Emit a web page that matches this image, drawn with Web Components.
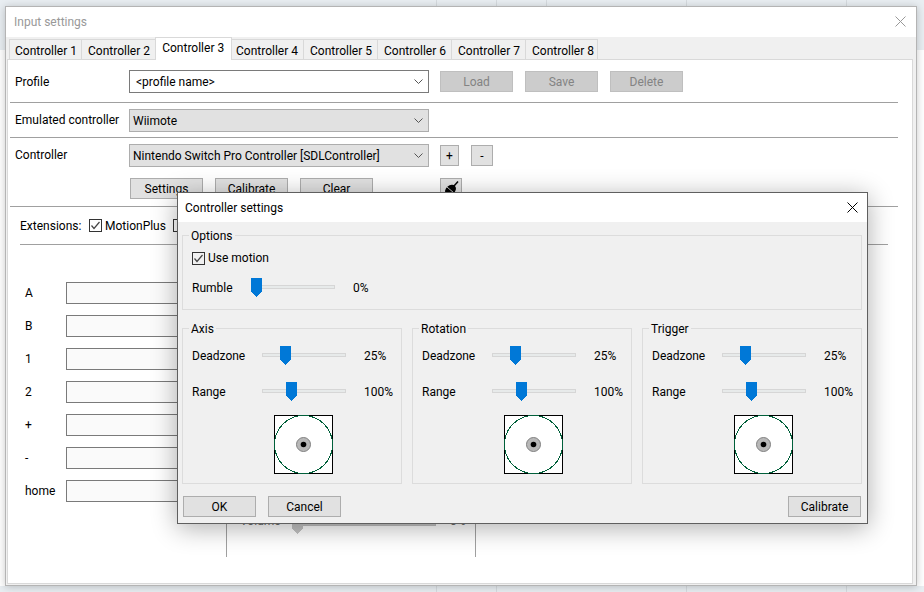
<!DOCTYPE html>
<html>
<head>
<meta charset="utf-8">
<title>Input settings</title>
<style>
  html, body { margin: 0; height: 100%; }
  body {
    width: 924px;
    height: 592px;
    overflow: hidden;
    position: relative;
    font: 12px Roboto, "Liberation Sans", sans-serif;
    color: #000;
    background:
      linear-gradient(#d6dbdf, #d6dbdf) 436px 0 / 1px 6px no-repeat,
      linear-gradient(#d6dbdf, #d6dbdf) 496px 0 / 1px 6px no-repeat,
      linear-gradient(#d6dbdf, #d6dbdf) 546px 0 / 1px 6px no-repeat,
      linear-gradient(#d6dbdf, #d6dbdf) 686px 0 / 1px 6px no-repeat,
      linear-gradient(#d6dbdf, #d6dbdf) 846px 0 / 1px 6px no-repeat,
      linear-gradient(#d6dbdf, #d6dbdf) 436px 586px / 1px 6px no-repeat,
      linear-gradient(#d6dbdf, #d6dbdf) 496px 586px / 1px 6px no-repeat,
      linear-gradient(#d6dbdf, #d6dbdf) 686px 586px / 1px 6px no-repeat,
      linear-gradient(#d6dbdf, #d6dbdf) 846px 586px / 1px 6px no-repeat,
      linear-gradient(#e9eef2, #e9eef2) 0 0 / 100% 50px no-repeat,
      linear-gradient(#e9eef2, #e9eef2) 0 586px / 100% 6px no-repeat,
      #fff;
  }
</style>
</head>
<body>
<input-settings></input-settings>
<controller-settings></controller-settings>

<script>
class UiButton extends HTMLElement {
  constructor() {
    super();
    const shadow = this.attachShadow({ mode: "open" });
    shadow.innerHTML = `
    <style>
      :host {
        display: flex;
        align-items: center;
        justify-content: center;
        box-sizing: border-box;
        width: 73px;
        height: 21px;
        flex: none;
        background: #e1e1e1;
        border: 1px solid #adadad;
      }
      :host([disabled]) {
        background: #cccccc;
        border-color: #bfbfbf;
        color: #838383;
      }
    </style>
    <slot></slot>`;
  }
}

class UiCombo extends HTMLElement {
  constructor() {
    super();
    const shadow = this.attachShadow({ mode: "open" });
    shadow.innerHTML = `
    <style>
      :host {
        display: flex;
        align-items: center;
        justify-content: space-between;
        box-sizing: border-box;
        width: 300px;
        height: 23px;
        flex: none;
        padding: 0 5px 0 3px;
        background: #e1e1e1;
        border: 1px solid #adadad;
      }
      :host([editable]) {
        background: #fff;
        border-color: #7a7a7a;
        padding-left: 6px;
      }
      svg { display: block; }
    </style>
    <slot></slot>
    <svg width="9" height="6" viewBox="0 0 9 6"><path d="M0.5 0.5 L4.5 4.5 L8.5 0.5" fill="none" stroke="#555"/></svg>`;
  }
}

class UiCheck extends HTMLElement {
  constructor() {
    super();
    const shadow = this.attachShadow({ mode: "open" });
    const mark = this.hasAttribute("unchecked") ? "" :
      `<path d="M2.5 6.5 L5 9.5 L10.5 3" fill="none" stroke="#444" stroke-width="1.2"/>`;
    shadow.innerHTML = `
    <style>
      :host { display: flex; align-items: center; gap: 3px; flex: none; }
      svg { display: block; flex: none; }
    </style>
    <svg width="13" height="13" viewBox="0 0 13 13">
      <rect x="0.5" y="0.5" width="12" height="12" fill="none" stroke="#333"/>
      ${mark}
    </svg>
    <slot></slot>`;
  }
}

class UiSlider extends HTMLElement {
  constructor() {
    super();
    const shadow = this.attachShadow({ mode: "open" });
    const offset = this.getAttribute("offset") || 0;
    shadow.innerHTML = `
    <style>
      :host {
        display: block;
        position: relative;
        width: 84px;
        height: 19px;
        flex: none;
      }
      .track {
        position: absolute;
        left: 0;
        right: 0;
        top: 7px;
        height: 4px;
        box-sizing: border-box;
        background: #e7eaea;
        border: 1px solid #d6d6d6;
      }
      svg { position: absolute; top: 0; left: ${offset}px; display: block; }
      :host([disabled]) .track { background: #c8c8c8; border-color: #c0c0c0; }
      :host([disabled]) polygon { fill: #c4c4c4; }
    </style>
    <div class="track"></div>
    <svg width="11" height="19" viewBox="0 0 11 19" shape-rendering="crispEdges"><polygon points="0,0 11,0 11,14 5.5,19 0,14" fill="#0078d7"/></svg>`;
  }
}

class UiGroup extends HTMLElement {
  constructor() {
    super();
    const shadow = this.attachShadow({ mode: "open" });
    shadow.innerHTML = `
    <style>
      :host {
        display: block;
        position: relative;
        box-sizing: border-box;
        border: 1px solid #dcdcdc;
        padding: 0 9px;
      }
      .legend {
        position: absolute;
        left: 6px;
        top: -7px;
        padding: 0 2px;
        line-height: 14px;
        background: linear-gradient(transparent 6px, #f0f0f0 6px);
      }
    </style>
    <div class="legend">${this.getAttribute("label")}</div>
    <slot></slot>`;
  }
}

class UiStick extends HTMLElement {
  constructor() {
    super();
    const shadow = this.attachShadow({ mode: "open" });
    shadow.innerHTML = `
    <style>
      :host { display: block; width: 59px; height: 59px; flex: none; }
      svg { display: block; }
    </style>
    <svg width="59" height="59" viewBox="0 0 59 59">
      <g shape-rendering="crispEdges">
        <rect x="0.5" y="0.5" width="58" height="58" fill="#fff" stroke="#000"/>
        <circle cx="29.5" cy="29.5" r="29" fill="#fff" stroke="#00603a"/>
      </g>
      <circle cx="29.5" cy="29.5" r="7" fill="#b8b8b8" stroke="#808080"/>
      <circle cx="29.5" cy="29.5" r="2.8" fill="#000"/>
    </svg>`;
  }
}

class StickGroup extends HTMLElement {
  constructor() {
    super();
    const shadow = this.attachShadow({ mode: "open" });
    shadow.innerHTML = `
    <style>
      :host { display: block; width: 220px; height: 156px; flex: none; }
      ui-group { height: 100%; padding-top: 17px; }
      .row { display: flex; align-items: center; height: 19px; margin-bottom: 17px; }
      .row span { padding-top: 1px; }
      .row span:first-child { width: 70px; flex: none; }
      .row span:last-child { margin-left: 18px; }
      ui-stick { margin: -3px 0 0 82px; }
    </style>
    <ui-group label="${this.getAttribute("label")}">
      <div class="row"><span>Deadzone</span><ui-slider offset="18"></ui-slider><span>25%</span></div>
      <div class="row"><span>Range</span><ui-slider offset="24"></ui-slider><span>100%</span></div>
      <ui-stick></ui-stick>
    </ui-group>`;
  }
}

class InputSettings extends HTMLElement {
  constructor() {
    super();
    const shadow = this.attachShadow({ mode: "open" });
    const widths = [73, 75, 77, 73, 75, 75, 75, 73];
    const pads = [5, 6, 6.2, 4, 6, 6, 6, 6];
    const tabs = widths.map((w, i) =>
      `<div class="tab${i === 2 ? " active" : ""}" style="width:${w}px;padding-left:${pads[i]}px">Controller ${i + 1}</div>`).join("");
    const binds = ["A", "B", "1", "2", "+", "-", "home"].map((n) =>
      `<div class="bind"><span>${n}</span><div class="field"></div></div>`).join("");
    shadow.innerHTML = `
    <style>
      :host {
        position: absolute;
        left: 5px;
        top: 6px;
        width: 912px;
        height: 580px;
        box-sizing: border-box;
        display: flex;
        flex-direction: column;
        background: #f0f0f0;
        border: 1px solid #b4b4b4;
        box-shadow: 0 1px 8px rgba(0, 0, 0, 0.22);
      }
      .title {
        height: 30px;
        flex: none;
        display: flex;
        align-items: center;
        justify-content: space-between;
        padding: 0 10px 0 8px;
        box-sizing: border-box;
        background: #fff;
        color: #999;
      }
      .title svg { display: block; margin-bottom: 2px; }
      .tabs { display: flex; height: 22px; flex: none; padding-left: 3px; }
      .tab {
        box-sizing: border-box;
        height: 20px;
        margin: 2px -1px 0 0;
        border: 1px solid #d9d9d9;
        border-bottom: none;
        display: flex;
        align-items: center;
        padding-top: 3px;
      }
      .tab.active {
        height: 23px;
        margin-top: 0;
        padding-top: 0;
        padding-bottom: 3px;
        background: #fff;
        position: relative;
        z-index: 1;
      }
      .pane {
        flex: 1;
        margin: 0 3px 1px 1px;
        background: #fff;
        border: 1px solid #d9d9d9;
        display: flex;
        flex-direction: column;
      }
      .row {
        box-sizing: border-box;
        flex: none;
        margin: 0 14px 0 2px;
        padding-left: 5px;
        border-bottom: 1px solid #a0a0a0;
      }
      .line { display: flex; align-items: flex-start; }
      .label { width: 114px; flex: none; line-height: 23px; }
      .r1 { height: 43px; padding-top: 10px; }
      .r1 .label { margin-top: 1px; }
      .r1 ui-button { margin: 1px 12px 0 0; }
      .r1 ui-button:first-of-type { margin-left: 11px; }
      .r2 { height: 35px; padding-top: 6px; }
      .r3 { height: 69px; padding-top: 6px; }
      .r3 .small { margin: 1px 0 0 11px; width: 19px; }
      .r3 .small + .small { margin-left: 12px; width: 22px; }
      .buttons { display: flex; gap: 12px; margin: 11px 0 0 115px; }
      .plug { width: 22px; height: 22px; margin-left: 55px; }
      .plug svg { display: block; }
      .ext {
        box-sizing: border-box;
        flex: none;
        height: 38px;
        margin: 0 24px 0 12px;
        border-bottom: 1px solid #a0a0a0;
        display: flex;
        align-items: center;
      }
      .ext .name { width: 69px; flex: none; }
      .ext .motion { width: 84px; }
      .map { display: flex; align-items: flex-start; }
      .binds {
        width: 201px;
        flex: none;
        margin-left: 17px;
        padding-top: 37px;
        display: flex;
        flex-direction: column;
        gap: 11px;
      }
      .bind { display: flex; align-items: center; }
      .bind span { width: 41px; flex: none; }
      .field {
        box-sizing: border-box;
        width: 150px;
        height: 22px;
        background: #fafafa;
        border: 1px solid #7a7a7a;
      }
      .extras {
        box-sizing: border-box;
        width: 250px;
        height: 307px;
        margin: 5px 0 0 0;
        border: solid #a0a0a0;
        border-width: 0 1px;
        padding: 0 0 23px 13px;
        display: flex;
        align-items: flex-end;
        color: #6d6d6d;
      }
      .extras span { line-height: 14px; margin-bottom: 6px; }
      .extras span:first-child { width: 52px; flex: none; }
      .extras ui-slider { width: 144px; flex: none; }
      .extras span:last-child { margin-left: 14px; }
    </style>
    <div class="title">
      <span>Input settings</span>
      <svg width="11" height="11" viewBox="0 0 11 11"><path d="M0.5 0.5 L10.5 10.5 M10.5 0.5 L0.5 10.5" stroke="#999" fill="none"/></svg>
    </div>
    <div class="tabs">${tabs}</div>
    <div class="pane">
      <div class="row r1 line">
        <div class="label">Profile</div>
        <ui-combo editable>&lt;profile name&gt;</ui-combo>
        <ui-button disabled>Load</ui-button>
        <ui-button disabled>Save</ui-button>
        <ui-button disabled>Delete</ui-button>
      </div>
      <div class="row r2 line">
        <div class="label">Emulated controller</div>
        <ui-combo>Wiimote</ui-combo>
      </div>
      <div class="row r3">
        <div class="line">
          <div class="label">Controller</div>
          <ui-combo>Nintendo Switch Pro Controller [SDLController]</ui-combo>
          <ui-button class="small">+</ui-button>
          <ui-button class="small">-</ui-button>
        </div>
        <div class="buttons">
          <ui-button>Settings</ui-button>
          <ui-button>Calibrate</ui-button>
          <ui-button>Clear</ui-button>
          <ui-button class="plug">
            <svg width="16" height="16" viewBox="0 0 16 16">
              <path d="M11 5 L15 0.5" stroke="#000" stroke-width="1.5" fill="none"/>
              <ellipse cx="7.5" cy="9" rx="6" ry="4.5" transform="rotate(-40 7.5 9)" fill="#000"/>
              <path d="M4 6 L11 12" stroke="#fff" stroke-width="0.8" fill="none"/>
            </svg>
          </ui-button>
        </div>
      </div>
      <div class="ext">
        <span class="name">Extensions:</span>
        <ui-check class="motion">MotionPlus</ui-check>
        <ui-check unchecked></ui-check>
      </div>
      <div class="map">
        <div class="binds">${binds}</div>
        <div class="extras">
          <span>Volume</span>
          <ui-slider disabled offset="0"></ui-slider>
          <span>0%</span>
        </div>
      </div>
    </div>`;
  }
}

class ControllerSettings extends HTMLElement {
  constructor() {
    super();
    const shadow = this.attachShadow({ mode: "open" });
    shadow.innerHTML = `
    <style>
      :host {
        position: absolute;
        left: 177px;
        top: 192px;
        width: 691px;
        height: 332px;
        box-sizing: border-box;
        background: #f0f0f0;
        border: 1px solid #5f5f5f;
        box-shadow: 0 4px 24px rgba(0, 0, 0, 0.32);
        display: flex;
        flex-direction: column;
      }
      .title {
        height: 29px;
        flex: none;
        display: flex;
        align-items: center;
        justify-content: space-between;
        padding: 1px 9px 0 7px;
        box-sizing: border-box;
        background: #fff;
      }
      .title svg { display: block; margin-top: -1px; }
      .body { flex: 1; padding: 13px 5px 0 4px; display: flex; flex-direction: column; }
      .options { height: 75px; flex: none; padding-top: 15px; }
      .rumble { display: flex; align-items: center; margin-top: 13px; }
      .rumble span { padding-top: 1px; }
      .rumble span:first-child { width: 59px; flex: none; }
      .rumble span:last-child { margin-left: 18px; }
      .sticks { display: flex; gap: 10px; margin-top: 18px; }
      .footer { display: flex; gap: 12px; margin: 12px 1px 0 1px; }
      .footer ui-button:last-child { margin-left: auto; }
    </style>
    <div class="title">
      <span>Controller settings</span>
      <svg width="11" height="11" viewBox="0 0 11 11"><path d="M0.5 0.5 L10.5 10.5 M10.5 0.5 L0.5 10.5" stroke="#000" fill="none"/></svg>
    </div>
    <div class="body">
      <ui-group class="options" label="Options">
        <ui-check>Use motion</ui-check>
        <div class="rumble"><span>Rumble</span><ui-slider offset="0"></ui-slider><span>0%</span></div>
      </ui-group>
      <div class="sticks">
        <stick-group label="Axis"></stick-group>
        <stick-group label="Rotation"></stick-group>
        <stick-group label="Trigger"></stick-group>
      </div>
      <div class="footer">
        <ui-button>OK</ui-button>
        <ui-button>Cancel</ui-button>
        <ui-button>Calibrate</ui-button>
      </div>
    </div>`;
  }
}

window.customElements.define("ui-button", UiButton);
window.customElements.define("ui-combo", UiCombo);
window.customElements.define("ui-check", UiCheck);
window.customElements.define("ui-slider", UiSlider);
window.customElements.define("ui-group", UiGroup);
window.customElements.define("ui-stick", UiStick);
window.customElements.define("stick-group", StickGroup);
window.customElements.define("input-settings", InputSettings);
window.customElements.define("controller-settings", ControllerSettings);
</script>
</body>
</html>
